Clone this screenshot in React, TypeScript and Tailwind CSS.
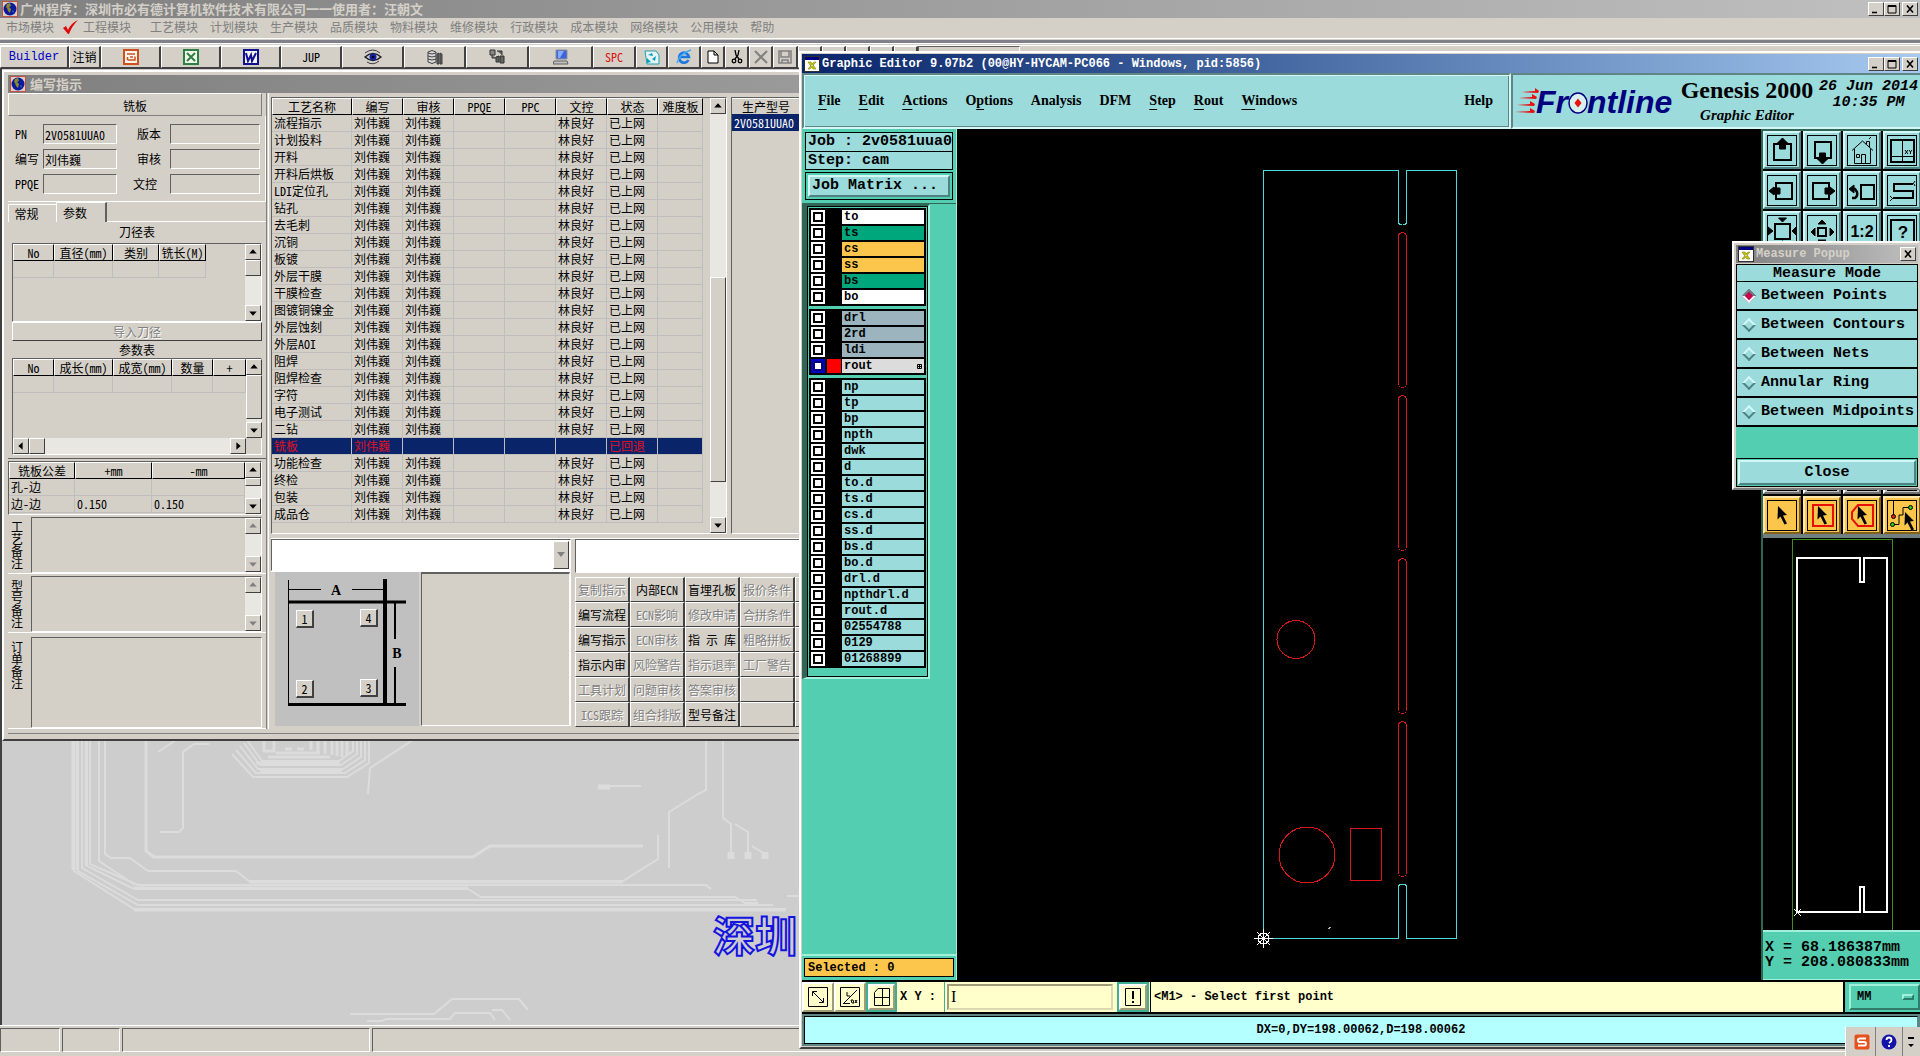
import type { ReactNode } from 'react'

const raised = 'border border-t-white border-l-white border-r-[#404040] border-b-[#404040]'
const sunken = 'border border-t-[#606060] border-l-[#606060] border-r-white border-b-white'
const motif =
  'border-2 border-t-[#d4f8f8] border-l-[#d4f8f8] border-r-[#4f8282] border-b-[#4f8282] bg-[#9bdbdb]'
const embossed = 'text-[#808080] [text-shadow:1px_1px_#fff]'
const mono = "font-['Liberation_Mono','Noto_Sans_CJK_SC',monospace] font-bold"

const MODULES = ['工艺模块', '计划模块', '生产模块', '品质模块', '物料模块', '维修模块', '行政模块', '成本模块', '网络模块', '公用模块', '帮助']

const STEPS = [
  '流程指示', '计划投料', '开料', '开料后烘板', 'LDI定位孔', '钻孔', '去毛刺', '沉铜',
  '板镀', '外层干膜', '干膜检查', '图镀铜镍金', '外层蚀刻', '外层AOI', '阻焊', '阻焊检查',
  '字符', '电子测试', '二钻', '铣板', '功能检查', '终检', '包装', '成品仓',
]

const ACTIONS: [string, boolean][] = [
  ['复制指示', false], ['内部ECN', true], ['盲埋孔板', true], ['报价条件', false], ['', false],
  ['编写流程', true], ['ECN影响', false], ['修改申请', false], ['合拼条件', false], ['', false],
  ['编写指示', true], ['ECN审核', false], ['指 示 库', true], ['粗略拼板', false], ['', false],
  ['指示内审', true], ['风险警告', false], ['指示退率', false], ['工厂警告', false], ['', false],
  ['工具计划', false], ['问题审核', false], ['答案审核', false], ['', false], ['', false],
  ['ICS跟踪', false], ['组合排版', false], ['型号备注', true], ['', false], ['', false],
]

const LAYERS = [
  [
    { name: 'to', bg: 'bg-white' },
    { name: 'ts', bg: 'bg-[#00a67c]' },
    { name: 'cs', bg: 'bg-[#fcc64c]' },
    { name: 'ss', bg: 'bg-[#fcc64c]' },
    { name: 'bs', bg: 'bg-[#00a67c]' },
    { name: 'bo', bg: 'bg-white' },
  ],
  [
    { name: 'drl', bg: 'bg-[#9bb4be]' },
    { name: '2rd', bg: 'bg-[#9bb4be]' },
    { name: 'ldi', bg: 'bg-[#9bb4be]' },
    { name: 'rout', bg: 'bg-[#dcdcdc]' },
  ],
  [
    'np', 'tp', 'bp', 'npth', 'dwk', 'd', 'to.d', 'ts.d', 'cs.d', 'ss.d', 'bs.d', 'bo.d',
    'drl.d', 'npthdrl.d', 'rout.d', '02554788', '0129', '01268899',
  ].map((name) => ({ name, bg: 'bg-[#9bdbdb]' })),
]

const MENUS: [string, number][] = [
  ['File', 0], ['Edit', 0], ['Actions', 0], ['Options', 1], ['Analysis', -1], ['DFM', -1], ['Step', 0], ['Rout', 0], ['Windows', 0],
]

const MEASURES = ['Between Points', 'Between Contours', 'Between Nets', 'Annular Ring', 'Between Midpoints']

function Globe() {
  return (
    <svg className="size-4 shrink-0" viewBox="0 0 16 16">
      <rect x="0.5" y="0.5" width="15" height="15" fill="#d4d0c8" stroke="#c85040" />
      <circle cx="8" cy="8" r="6.5" fill="#0a1a9c" />
      <path d="M5 3l3-1 1 3-2 1 2 2-1 4-2-2-1-3-1-1z" fill="#8a8a2a" />
      <path d="M10 9l2 1-1 2z" fill="#3c6ad0" />
    </svg>
  )
}

function XIcon() {
  return (
    <svg className="size-4 shrink-0" viewBox="0 0 16 16">
      <rect x="0.5" y="0.5" width="15" height="15" fill="#fff" stroke="#303030" />
      <rect x="1" y="1" width="14" height="3" fill="#000080" />
      <path d="M4 6l3 0 5 7-3 0zM12 6l-2 0-6 7 2 0z" fill="#c8c800" stroke="#707000" strokeWidth="0.5" />
    </svg>
  )
}

function CaptionButton({ label, children }: { label: string; children: ReactNode }) {
  return (
    <button aria-label={label} className={`${raised} h-3.5 w-4 bg-[#d4d0c8]`}>
      <svg className="size-full" viewBox="0 0 14 12" fill="none" stroke="#000" strokeWidth="1.6">{children}</svg>
    </button>
  )
}

function Caption() {
  return (
    <div className="ml-auto flex items-center">
      <CaptionButton label="最小化"><path d="M3 9.5h5" /></CaptionButton>
      <CaptionButton label="最大化"><path d="M3 2.5h8v7.5h-8zM3 3.5h8" strokeWidth="1" /></CaptionButton>
      <span className="w-0.5" />
      <CaptionButton label="关闭"><path d="M4 2.5l6 7M10 2.5l-6 7" /></CaptionButton>
    </div>
  )
}

function Arrow({ d, off }: { d: 'up' | 'down' | 'left' | 'right'; off?: boolean }) {
  const paths = { up: 'M3 8l3.5-4L10 8z', down: 'M3 5l3.5 4L10 5z', left: 'M8 3L4 6.5 8 10z', right: 'M5 3l4 3.5L5 10z' }
  return (
    <button aria-label={d} disabled={off} className={`${raised} size-4 shrink-0 bg-[#d4d0c8]`}>
      <svg className="size-full" viewBox="0 0 13 13"><path d={paths[d]} fill={off ? '#808080' : '#000'} /></svg>
    </button>
  )
}

function ScrollBar({ thumb, off }: { thumb?: string; off?: boolean }) {
  return (
    <div className="ml-auto flex w-4 shrink-0 flex-col bg-[#e9e7e2]">
      <Arrow d="up" off={off} />
      <div className="flex-1">{thumb && <div className={`${raised} ${thumb} bg-[#d4d0c8]`} />}</div>
      <Arrow d="down" off={off} />
    </div>
  )
}

function Grid({ cols, rows, width }: { cols: [string, string][]; rows: string[][]; width: string }) {
  return (
    <table className={`${width} table-fixed border-separate border-spacing-0 self-start`}>
      <thead>
        <tr>
          {cols.map(([label, w]) => (
            <th key={label} className={`${w} h-[17px] overflow-hidden border-t border-r border-b border-l border-t-white border-r-black border-b-black border-l-white p-0 text-center leading-[15px] font-normal whitespace-nowrap`}>
              {label}
            </th>
          ))}
        </tr>
      </thead>
      <tbody>
        {rows.map((row, i) => {
          const picked = row[0] === '铣板'
          return (
            <tr key={i} className={picked ? 'bg-[#0a246a] text-[#e01020]' : ''}>
              {row.map((cell, j) => (
                <td key={j} className="h-[17px] border-r border-b border-[#c0bebc] p-0 pl-0.5 leading-4 whitespace-nowrap">{cell}</td>
              ))}
            </tr>
          )
        })}
      </tbody>
    </table>
  )
}

function Tool({ w, label, children }: { w: string; label: string; children?: ReactNode }) {
  return (
    <button aria-label={label} className={`${raised} ${w} flex h-[22px] shrink-0 items-center justify-center border-r-2`}>
      {children}
    </button>
  )
}

function Office({ color, children }: { color: string; children: ReactNode }) {
  return (
    <svg className="size-4" viewBox="0 0 16 16" fill="none" stroke={color} strokeWidth="2">
      <rect x="1" y="1" width="14" height="14" fill="#f4f4f0" />
      {children}
    </svg>
  )
}

function Toolbar() {
  return (
    <div className="flex h-[22px] shrink-0">
      <button className={`${raised} w-[69px] border-r-2 font-['Liberation_Mono',monospace] text-[#0000c8]`}>Builder</button>
      <button className={`${raised} w-8 border-r-2`}>注销</button>
      <Tool w="w-[60px]" label="PowerPoint">
        <Office color="#d0501c"><path d="M4 5h8M4.500 11h7.500V7.500M4.500 8v3M7 8h3" strokeWidth="1.5" /></Office>
      </Tool>
      <Tool w="w-[60px]" label="Excel">
        <Office color="#2c8040"><path d="M4 4l8 8M12 4l-8 8" /></Office>
      </Tool>
      <Tool w="w-[60px]" label="Word">
        <Office color="#101090"><path d="M3 4l2 8 3-6 1 6 4-8" /></Office>
      </Tool>
      <Tool w="w-[61px]" label="JUP">JUP</Tool>
      <Tool w="w-[62px]" label="查看">
        <svg className="h-4 w-[18px]" viewBox="0 0 18 16">
          <path d="M1 8q8-7 16 0q-8 7-16 0z" fill="#c8d0d8" stroke="#202020" strokeWidth="1.5" />
          <path d="M1 4q8-6 15 0M3 13q6 4 12-1" fill="none" stroke="#404040" />
          <circle cx="9" cy="8" r="3.5" fill="#1020a0" />
          <circle cx="9" cy="8" r="1.3" fill="#000" />
        </svg>
      </Tool>
      <Tool w="w-[62px]" label="数据库">
        <svg className="size-4" viewBox="0 0 16 16" stroke="#404040">
          <path d="M1 3v10q4 3 8 0V3q-4-3-8 0z" fill="#d8d8d8" />
          <path d="M1 4q4 2 8 0M1 7q4 2 8 0M1 10q4 2 8 0" fill="none" />
          <path d="M10 5l2-1v11h-2zM13 4l2 1v10h-2z" fill="#606060" />
        </svg>
      </Tool>
      <Tool w="w-[63px]" label="网络">
        <svg className="size-4" viewBox="0 0 16 16" stroke="#303030">
          <path d="M1 1h5v5h-5zM3 6v3h5" fill="#8a8a8a" />
          <path d="M7 8l3-1v6h-3zM11 7h4v7h-4zM8 2h5v4" fill="#606860" />
        </svg>
      </Tool>
      <Tool w="w-16" label="电脑">
        <svg className="size-4" viewBox="0 0 16 16">
          <path d="M3 1h11v9h-11z" fill="#3c64e0" stroke="#909090" />
          <path d="M5 2h6l-4 7h-2z" fill="#88a8f8" />
          <path d="M1 12h13l1 3h-15z" fill="#c0c0c0" stroke="#606060" />
        </svg>
      </Tool>
      <Tool w="w-[43px]" label="SPC"><span className="text-[#e01010]">SPC</span></Tool>
      <Tool w="w-8" label="回收">
        <svg className="size-4" viewBox="0 0 16 16">
          <path d="M1 2h11l3 4v9h-12z" fill="#e8f4f4" stroke="#20a0b0" />
          <path d="M4 6l4-2 1 3zM12 7l-1 5-3-2zM3 9l4 4-4 1z" fill="#00a0c0" />
        </svg>
      </Tool>
      <Tool w="w-[33px]" label="浏览器">
        <svg className="size-4" viewBox="0 0 16 16" fill="none">
          <path d="M12.5 11a5 5 0 1 1 .5-3h-9" stroke="#1c78e0" strokeWidth="2.6" />
          <path d="M1 14q2-9 14-13" stroke="#40a8f8" strokeWidth="1.4" />
        </svg>
      </Tool>
      <Tool w="w-6" label="新建">
        <svg className="h-3.5 w-3" viewBox="0 0 12 14"><path d="M1 1h6l4 4v8h-10zM7 1v4h4" fill="#fff" stroke="#000" /></svg>
      </Tool>
      <Tool w="w-6" label="剪切">
        <svg className="h-3.5 w-3" viewBox="0 0 12 14" fill="none" stroke="#000" strokeWidth="1.3">
          <path d="M4 0l1 5 3 4M8 0l-1 5-3 4" /><circle cx="3" cy="11" r="1.8" /><circle cx="9" cy="11" r="1.8" />
        </svg>
      </Tool>
      <Tool w="w-6" label="删除">
        <svg className="size-3.5" viewBox="0 0 14 14"><path d="M1 1l12 12M13 1l-12 12" stroke="#808080" strokeWidth="2" /></svg>
      </Tool>
      <Tool w="w-[25px]" label="保存">
        <svg className="size-3.5" viewBox="0 0 14 14"><path d="M1 1h12v12h-12zM3 1v6h8v-6M4 13v-3h6v3" fill="none" stroke="#808080" strokeWidth="1.5" /></svg>
      </Tool>
      {['首条', '上条', '下条', '末条', '刷新'].map((t) => <Tool key={t} w="w-6" label={t} />)}
      <div className={`${sunken} w-[102px]`} />
    </div>
  )
}

// Copper traces behind the child windows
function Traces() {
  return (
    <svg className="absolute bottom-0 left-0 h-[285px] w-[1100px]" viewBox="2 0 1100 285" fill="none" stroke="#dcdcdc" strokeWidth="2">
      <path d="M74 0V131L134 169H786M78 0V131L138 165H773M82 0V128L138 160H757M87 0V126L134 149H468L481 157H735L745 163H758M90 0V124L138 145H706L711 149M99 0V121L135 145" />
      <path d="M105 0V114L111 118H130L148 131H236L249 141H623L658 119V95" />
      <path d="M134 148H468M134 170H786M249 142H623M73 0V130M77 0V130M86 0V126" strokeWidth="3" />
      <path d="M146 0V111L154 117H473L490 106H643" strokeWidth="3" />
      <path d="M209 4H194L183 12V88L179 92H160M176 0L158 12M413 0L370 28L368 54" />
      <path d="M605 46H641M706 0V50L698 54L669 72V128M723 0V78L731 84V118M735 84L748 92V118M752 106L765 114V118" />
      <path d="M731 112v7M748 112v7M765 112v7" strokeWidth="7" />
      <path d="M598 47h12" strokeWidth="5" />
      <path d="M350 274H434L452 259H519L528 270M367 281H382L386 279H450L455 273H490L495 280M492 270H502L510 280M787 156H800" />
      {/* coil */}
      <path d="M232 14L253 37H347L369 23V0M236 10L256 33H345L365 20V0M240 6L258 29H343L361 17V0M244 3L260 25H341L357 14V0M247 0L262 21H339L353 11V0" />
      <path d="M256 23H340M260 31H342M268 17H330M276 13H320M264 0V11h10V0M285 9h7M297 9h7M311 0V10M318 0V12M325 0V14M332 0V15M337 0V16M342 0V17M347 0V15" strokeWidth="3" />
      <text x="713" y="212" fontSize="42" fontWeight="700" stroke="#1414e0" strokeWidth="2" className="font-['Noto_Sans_CJK_SC',sans-serif]">深圳</text>
    </svg>
  )
}

function Field({ label, value, id, pad }: { label: string; value?: string; id: string; pad: string }) {
  return (
    <>
      <label htmlFor={id} className={`${pad} self-center whitespace-nowrap`}>{label}</label>
      <input id={id} defaultValue={value} className={`${sunken} h-5 w-full min-w-0 px-px`} />
    </>
  )
}

function Note({ label, id, h, scroll }: { label: string; id: string; h: string; scroll?: boolean }) {
  return (
    <div className={`${h} mt-0.5 flex border-b border-white`}>
      <label htmlFor={id} className="w-[23px] shrink-0 pt-1 pr-2 pl-[3px] leading-3 break-all">{label}</label>
      <div className={`${sunken} mr-1 flex flex-1`}>
        <textarea id={id} className="h-full min-w-0 flex-1 resize-none outline-none" />
        {scroll && <ScrollBar off />}
      </div>
    </div>
  )
}

function LeftPane() {
  return (
    <div className="flex w-[259px] shrink-0 flex-col border-r border-[#808080]">
      <div className="mr-1 h-[23px] border border-t-white border-r-[#808080] border-b-[#808080] border-l-white text-center leading-[23px]">铣板</div>
      <div className="grid h-[86px] grid-cols-[28px_74px_53px_90px] content-start gap-y-[5px] border-r border-b border-white pt-2 pl-[7px]">
        <Field id="pn" label="PN" value="2V0581UUA0" pad="pl-0" />
        <Field id="ver" label="版本" pad="pl-5" />
        <Field id="writer" label="编写" value="刘伟巍" pad="pl-0" />
        <Field id="check" label="审核" pad="pl-5" />
        <Field id="ppqe" label="PPQE" pad="pl-0" />
        <Field id="doc" label="文控" pad="pl-4" />
      </div>
      <div className="flex h-5 items-end">
        <button className="h-[18px] w-12 border-t border-l border-white pr-3">常规</button>
        <button className="h-5 w-[51px] border-t border-r-2 border-l border-t-white border-r-[#606060] border-l-white pr-3">参数</button>
        <div className="flex-1 self-end border-b border-white" />
      </div>
      <div className="flex h-[237px] flex-col border-b border-[#606060] px-1">
        <h3 className="h-[21px] text-center leading-5">刀径表</h3>
        <div className={`${sunken} flex h-[79px]`}>
          <Grid width="w-[193px]" cols={[['No', 'w-[41px]'], ['直径(mm)', 'w-[59px]'], ['类别', 'w-[46px]'], ['铣长(M)', 'w-[47px]']]} rows={[['', '', '', '']]} />
          <ScrollBar thumb="h-4" />
        </div>
        <button disabled className={`${raised} ${embossed} h-[19px] shrink-0 leading-4`}>导入刀径</button>
        <h3 className="h-[17px] text-center leading-[17px]">参数表</h3>
        <div className={`${sunken} flex h-[97px]`}>
          <div className="flex w-[233px] flex-col justify-between">
            <Grid width="w-[233px]" cols={[['No', 'w-[41px]'], ['成长(mm)', 'w-[59px]'], ['成宽(mm)', 'w-[59px]'], ['数量', 'w-[41px]'], ['+', 'w-[33px]']]} rows={[['', '', '', '', '']]} />
            <div className="flex bg-[#e9e7e2]">
              <Arrow d="left" />
              <div className={`${raised} size-4 bg-[#d4d0c8]`} />
              <span className="flex-1" />
              <Arrow d="right" />
            </div>
          </div>
          <div className="mb-4 ml-auto flex"><ScrollBar thumb="h-11" /></div>
        </div>
      </div>
      <div className={`${sunken} mt-0.5 mr-1 flex h-[54px] shrink-0 overflow-hidden`}>
        <Grid width="w-[236px]" cols={[['铣板公差', 'w-[66px]'], ['+mm', 'w-[77px]'], ['-mm', 'w-[93px]']]} rows={[['孔-边', '', ''], ['边-边', '0.150', '0.150']]} />
        <ScrollBar thumb="h-2" />
      </div>
      <Note id="n1" label="工艺备注" h="h-[57px]" scroll />
      <Note id="n2" label="型号备注" h="h-[57px]" scroll />
      <Note id="n3" label="订单备注" h="h-[94px] pt-0.5" />
    </div>
  )
}

function PanelDiagram() {
  const pad = `${raised} absolute size-[18px] border-r-2 border-b-2 bg-[#d4d0c8] leading-3`
  return (
    <div className="relative ml-1 h-[154px] w-36 bg-[#c0c0c0]">
      <svg className="size-full" viewBox="0 0 144 154" fill="none" stroke="#000">
        <path d="M13.5 8V134M13 17.5h33M77 17.5h31" />
        <path d="M13 30h118M13 132.5h118" strokeWidth="3" />
        <path d="M110 7V134" strokeWidth="4" />
        <path d="M120 30V67M120 95V132" strokeWidth="2" />
        <text x="61" y="23" textAnchor="middle" fontSize="14" fontWeight="700" fill="#000" stroke="none" className="font-['Liberation_Serif',serif]">A</text>
        <text x="122" y="86" textAnchor="middle" fontSize="14" fontWeight="700" fill="#000" stroke="none" className="font-['Liberation_Serif',serif]">B</text>
      </svg>
      <button className={`${pad} top-[38px] left-[21px]`}>1</button>
      <button className={`${pad} top-[37px] left-[85px]`}>4</button>
      <button className={`${pad} top-[108px] left-[21px]`}>2</button>
      <button className={`${pad} top-[107px] left-[85px]`}>3</button>
    </div>
  )
}

function FlowPane() {
  const rows = STEPS.map((s) =>
    s === '铣板' ? [s, '刘伟巍', '', '', '', '', '已回退', ''] : [s, '刘伟巍', '刘伟巍', '', '', '林良好', '已上网', ''],
  )
  return (
    <div className="ml-px flex flex-1 flex-col border-l border-white pt-1 pl-0.5">
      <div className="flex h-[437px]">
        <div className={`${sunken} flex w-[456px]`}>
          <Grid
            width="w-[431px]"
            cols={[['工艺名称', 'w-[80px]'], ['编写', 'w-[51px]'], ['审核', 'w-[51px]'], ['PPQE', 'w-[51px]'], ['PPC', 'w-[51px]'], ['文控', 'w-[51px]'], ['状态', 'w-[51px]'], ['难度板', 'w-[45px]']]}
            rows={rows}
          />
          <ScrollBar thumb="mt-[163px] h-[205px]" />
        </div>
        <div className={`${sunken} ml-1 flex-1`}>
          <table className="w-[68px] border-separate border-spacing-0">
            <thead><tr><th className="h-4 border-t border-white p-0 text-center leading-[15px] font-normal">生产型号</th></tr></thead>
            <tbody><tr><td className="h-[17px] bg-[#0a246a] p-0 pl-0.5 leading-4 text-white">2V0581UUA0</td></tr></tbody>
          </table>
        </div>
      </div>
      <div className="mt-1 flex border-t border-white">
        <div className="w-[300px]">
          <div className={`${sunken} flex h-8 bg-white p-px`}>
            <select aria-label="工艺" className="min-w-0 flex-1 appearance-none" />
            <button aria-label="展开" className={`${raised} flex w-4 items-center justify-center bg-[#d4d0c8]`}>
              <svg className="h-1.5 w-2" viewBox="0 0 8 6"><path d="M0 0h8l-4 5z" fill="#808080" /></svg>
            </button>
          </div>
          <div className="flex border-t border-r border-white">
            <PanelDiagram />
            <div className={`${sunken} ml-0.5 h-[154px] flex-1 border-t-2`} />
          </div>
        </div>
        <div className="ml-1 flex-1">
          <input aria-label="搜索" className={`${sunken} mb-1 h-[34px] w-full bg-white`} />
          <div className="grid auto-rows-[25px] grid-cols-[repeat(5,55px)]">
            {ACTIONS.map(([label, on], i) => (
              <button key={i} disabled={!on} className={`${raised} border-r-2 whitespace-pre ${on ? '' : embossed}`}>{label}</button>
            ))}
          </div>
        </div>
      </div>
    </div>
  )
}

function InstructionWindow() {
  return (
    <section className="absolute top-px right-0 left-0 h-[671px] border-2 border-t-white border-r-[#404040] border-b-[#404040] border-l-white bg-[#d4d0c8] px-1 pt-[3px]">
      <div className="flex h-[18px] items-center gap-1 bg-linear-to-r from-[#808080] to-[#c0c0c0] pl-0.5 text-[13px] font-bold text-[#d4d0c8]">
        <Globe />编写指示
      </div>
      <div className="flex h-[641px] border-b border-[#808080] pb-1">
        <LeftPane />
        <FlowPane />
      </div>
    </section>
  )
}

/* ---------- Graphic Editor ---------- */

function FrontlineLogo() {
  return (
    <svg className="h-11 w-[162px] shrink-0" viewBox="0 -4 162 44" role="img" aria-label="Frontline">
      <path d="M6 7l14-1 0-3 4 3-1 2zM4 13l13-1 0-3 5 3-1 2zM2 20l13-1 0-3 5 3-1 2zM0 27l15-1 0-3 5 3-1 2z" fill="#e81010" />
      <g fill="#000080" fontSize="32" fontWeight="700" fontStyle="italic" className="font-['Liberation_Sans',sans-serif]">
        <text x="21" y="28">Fr</text>
        <text x="72" y="28">ntline</text>
      </g>
      <ellipse cx="63" cy="18" rx="9" ry="10" fill="#d8f0f0" stroke="#000080" strokeWidth="1.5" />
      <path d="M63 13.500l3.500 4.500-3.500 4.500-3.500-4.500z" fill="#e81010" />
    </svg>
  )
}

function MenuBar() {
  return (
    <div className="flex h-14 shrink-0 text-black">
      <nav className="flex flex-1 items-center gap-[18px] border-2 border-t-[#5f8585] border-r-[#d4f8f8] border-b-[#d4f8f8] border-l-[#5f8585] bg-[#9bdbdb] pr-4 pl-3.5 font-['Liberation_Serif',serif] text-sm font-bold shadow-[inset_1px_1px_#d4f8f8,inset_-1px_-1px_#5f8585]">
        {MENUS.map(([label, key]) => (
          <button key={label}>
            {key < 0 ? label : (
              <>{label.slice(0, key)}<span className="underline underline-offset-4">{label[key]}</span>{label.slice(key + 1)}</>
            )}
          </button>
        ))}
        <button className="ml-auto">Help</button>
      </nav>
      <div className="flex w-[409px] items-start border-2 border-t-[#5f8585] border-r-0 border-b-[#d4f8f8] border-l-[#5f8585] bg-[#9bdbdb] pl-0.5">
        <div className="pt-1.5"><FrontlineLogo /></div>
        <div className="flex w-[140px] shrink-0 flex-col items-center font-['Liberation_Serif',serif] font-bold">
          <span className="text-2xl leading-[30px] whitespace-nowrap">Genesis 2000</span>
          <span className="text-[15px] leading-5 italic">Graphic Editor</span>
        </div>
        <div className={`${mono} w-[103px] shrink-0 pt-1 text-center text-[15px] leading-4 whitespace-nowrap italic`}>
          <div>26 Jun 2014</div>
          <div>10:35 PM</div>
        </div>
      </div>
    </div>
  )
}

function LayerDock() {
  return (
    <div className={`${mono} flex w-[155px] shrink-0 flex-col border-r border-[#a0f0dc] bg-[#54ceb0]`}>
      <div className="flex flex-col px-[3px] pt-[3px] pb-[3px] text-[15px] leading-[18px]">
        <div className="h-5 border border-black bg-[#9bdbdb] pl-0.5 whitespace-nowrap">Job : 2v0581uua0</div>
        <div className="h-[18px] border border-t-0 border-black bg-[#9bdbdb] pl-0.5">Step: cam</div>
        <div className="mt-0.5 border border-black p-0.5">
          <button className={`${motif} block h-[22px] w-full pl-0.5 text-left`}>Job Matrix ...</button>
        </div>
      </div>
      <div className="flex-1 border-t border-b-2 border-t-[#2f6655] border-b-[#a0f0dc]">
        <div className="w-32 border-t-2 border-r-2 border-b-2 border-l-[5px] border-t-[#2f6655] border-r-[#a0f0dc] border-b-[#a0f0dc] border-l-[#2f6655]">
          <div className="flex flex-col gap-[3px] border border-black p-px pb-2">
            {LAYERS.map((group, i) => (
              <div key={i} className="bg-black px-0.5 pt-0.5">
                {group.map(({ name, bg }) => (
                  <label key={name} className="mb-0.5 flex h-3.5 text-xs leading-[14px]">
                    <input
                      type="checkbox"
                      defaultChecked={name === 'rout'}
                      className="size-3.5 shrink-0 appearance-none border-2 border-white bg-white shadow-[inset_0_0_0_2px_#000] checked:border-[#0000c8] checked:shadow-[inset_0_0_0_2px_#000080]"
                    />
                    <span className={`mr-px ml-0.5 w-3.5 shrink-0 ${name === 'rout' ? 'bg-[#ff0000]' : 'bg-black'}`} />
                    <span className={`${bg} flex min-w-0 flex-1 items-center pl-0.5`}>
                      {name}
                      {name === 'rout' && (
                        <svg className="mr-0.5 ml-auto size-[5px]" viewBox="0 0 5 5"><path d="M.5.5h4v4h-4zM2.500 0v5M0 2.500h5" fill="none" stroke="#000" /></svg>
                      )}
                    </span>
                  </label>
                ))}
              </div>
            ))}
          </div>
        </div>
      </div>
      <div className="p-0.5 pb-[3px]">
        <div className="h-[19px] border border-black bg-[#fcc64c] pl-[3px] text-xs leading-[18px]">Selected : 0</div>
      </div>
    </div>
  )
}

const RED_SLOTS = [232, 395, 558, 721]

function Board() {
  return (
    <div className="min-w-0 flex-1 overflow-hidden bg-black">
      <svg className="h-[848px] w-[804px]" viewBox="957 129 804 848" fill="none" strokeWidth="1" shapeRendering="crispEdges">
        <path d="M1263.5 170.500H1398.500V222q0 3 4 3t4-3V170.500H1456.500V938.500H1406.500V887q0-3-4-3t-4 3V938.500H1263.500z" stroke="#4fd8d8" />
        <g stroke="#d81818">
          {RED_SLOTS.map((y) => <rect key={y} x="1398.5" y={y + 0.5} width="8" height="155" rx="4" />)}
          <circle cx="1296" cy="639.5" r="19" />
          <circle cx="1307" cy="855" r="28" />
          <rect x="1350.5" y="828.5" width="31" height="52" />
        </g>
        <g stroke="#fff">
          <circle cx="1263.5" cy="938.5" r="5.5" />
          <path d="M1254 938.500h19M1263.500 929v19M1257 932l13 13M1270 932l-13 13" />
          <path d="M1328 929l3-2" stroke="#b0b0b0" />
        </g>
      </svg>
    </div>
  )
}

const ICONS: [string, ReactNode][] = [
  ['Pan up', <><path d="M11 13h17v16h-17z" strokeWidth="2" /><path d="M19.500 7l5 5h-2v6h-6v-6h-2z" fill="#000" /></>],
  ['Pan down', <><path d="M12 11h16v16h-16z" strokeWidth="2" /><path d="M19.500 33l5-5h-2v-6h-6v6h-2z" fill="#000" /></>],
  ['Home', <path d="M9 19.500L19.500 10L30 19.500M11.500 18V32.500H27.500V18M18.500 32V23.500h4V32M13.500 23.500h3v3h-3zM23.500 13V10.500h3V16M26 8l2-2" />],
  ['Grid', <><path d="M8 9h23v22h-23z" strokeWidth="2" /><path d="M19.500 9v22M8 25.500h23M22 19l3 4M25 19l-3 4M26 19l1.500 2L29 19M27.500 21v2" /></>],
  ['Pan left', <><path d="M13 12h16v16h-16z" strokeWidth="2" /><path d="M6 20l5-4v1h6v6h-6v1z" fill="#000" /></>],
  ['Pan right', <><path d="M10 12h16v16h-16z" strokeWidth="2" /><path d="M32 20l-5-4v1h-5v6h5v1z" fill="#000" /></>],
  ['Undo', <><path d="M18 14h13v14h-13z" strokeWidth="2" /><path d="M9 27h3q3-2 2-6l-2-3H9" strokeWidth="2.500" /><path d="M6 18l5-4v8z" fill="#000" /></>],
  ['Snake', <><path d="M30 13H11V20H30V27H10" strokeWidth="2" /><path d="M30 13l2-3M10 27l-3 3M31 13l1 2M7 25l2 2" /></>],
  ['Zoom in', <><path d="M12 13h15v15h-15z" strokeWidth="2" /><path d="M19.500 11l-4-4h8zM10 20l-5-4v8zM29 20l4-4v8zM19.500 30l-4 3h8z" fill="#000" /></>],
  ['Zoom out', <><path d="M15 17h8v8h-8z" strokeWidth="2" /><path d="M19 9l-4 4h8zM8 21l4-4v8zM31 21l-4-4v8zM19 32l-4-3h8z" fill="#000" /></>],
  ['Scale', <text x="19" y="26" textAnchor="middle" fontSize="16" fontWeight="700" fill="#000" stroke="none" className="font-['Liberation_Sans',sans-serif]">1:2</text>],
  ['Help', <><path d="M8 9h23v24h-23z" strokeWidth="2" /><text x="20" y="27" textAnchor="middle" fontSize="17" fontWeight="700" fill="#000" stroke="none" className="font-['Liberation_Sans',sans-serif]">?</text></>],
]

const cursor = <path d="M15 10l9 9-4 .5 4 8-2.500 1-4-8-3 3z" fill="#000" stroke="none" />

const PICKS: [string, ReactNode][] = [
  ['Select', cursor],
  ['Select in box', <><path d="M10 9h20v21h-20z" stroke="#e81000" strokeWidth="2" />{cursor}</>],
  ['Select in polygon', <><path d="M15 9h15v21H15l-6-7V16z" stroke="#e81000" strokeWidth="2" />{cursor}</>],
  ['Select net', <><path d="M10.500 5v16M10 28.500h6V19h4V11.500h7" /><circle cx="10.500" cy="20.500" r="2" fill="#e02010" /><circle cx="9.500" cy="28.500" r="2" fill="#20d020" /><circle cx="27.500" cy="11.500" r="2" fill="#20d020" /><g transform="translate(7 6)">{cursor}</g></>],
]

function IconButton({ label, tone, children }: { label: string; tone: string; children?: ReactNode }) {
  return (
    <button aria-label={label} className={`${tone} size-[38px] border-2`}>
      <svg className="size-[34px]" viewBox="2 2 34 34" fill="none" stroke="#000">
        <rect x="4.5" y="4.5" width="29" height="30" />
        {children}
      </svg>
    </button>
  )
}

function SidePanel() {
  return (
    <div className="flex w-[159px] shrink-0 flex-col border-l-2 border-[#2f6655] bg-black">
      <div className="flex h-[365px] shrink-0 flex-col justify-between overflow-hidden border-t-2 border-[#2f6655]">
        <div className="grid auto-rows-[40px] grid-cols-[repeat(4,40px)]">
          {ICONS.map(([label, icon]) => (
            <IconButton key={label} label={label} tone="border-t-[#d4f8f8] border-l-[#d4f8f8] border-r-[#4f8282] border-b-[#4f8282] bg-[#9bdbdb]">{icon}</IconButton>
          ))}
        </div>
        <div className="grid auto-rows-[38px] grid-cols-[repeat(4,40px)]">
          {['Width', 'Length', 'Area', 'Angle'].map((label) => (
            <IconButton key={label} label={label} tone="border-t-white border-l-white border-r-[#707070] border-b-[#707070] bg-[#c8c8c8]" />
          ))}
        </div>
      </div>
      <div className="grid h-[44px] shrink-0 grid-cols-[repeat(4,40px)] overflow-hidden border-b-4 border-[#708080] pt-0.5">
        {PICKS.map(([label, icon]) => (
          <IconButton key={label} label={label} tone="border-t-[#ffe8b0] border-l-[#ffe8b0] border-r-[#80601c] border-b-[#80601c] bg-[#fcc64c]">{icon}</IconButton>
        ))}
      </div>
      <svg className="h-[392px] w-[157px] shrink-0" viewBox="1763 538 157 392" fill="none" shapeRendering="crispEdges">
        <path d="M1792.500 930V539.500H1892.500V930" stroke="#3f8c20" />
        <path d="M1797 558H1860V582H1864V558H1887V912H1864V887H1860V912H1797z" stroke="#fff" strokeWidth="2" />
        <path d="M1794 909l7 7M1801 909l-7 7" stroke="#fff" />
      </svg>
      <div className={`${mono} flex-1 border-t-2 border-b border-[#a0f0dc] bg-[#54ceb0] pt-2 pl-0.5 text-[15px] leading-[15px] whitespace-nowrap`}>
        <div>X = 68.186387mm</div>
        <div>Y = 208.080833mm</div>
      </div>
    </div>
  )
}

function CommandBar() {
  const key = 'flex items-center justify-center border-2 border-t-white border-l-white border-r-[#a09c78] border-b-[#a09c78] bg-[#ffffcc]'
  return (
    <div className={`${mono} flex h-[34px] shrink-0 border-y-2 border-black bg-[#ffffcc] text-xs`}>
      <button aria-label="Measure" className={`${key} w-8`}>
        <svg className="size-5" viewBox="0 0 20 20" fill="none" stroke="#000"><path d="M.5.500h19v19h-19zM5 5l10 10M4.500 9V4.500H9M15.500 11v4.500H11" /></svg>
      </button>
      <button aria-label="Slope" className={`${key} w-8 border-l-black`}>
        <svg className="size-5" viewBox="0 0 20 20" fill="none" stroke="#000"><path d="M.5.500h19v19h-19zM3 17L17 3M3 16.500h7M7 5v4h3M11 13l1 3h2l-1-3zM15 13l2 3M17 13l-2 3" /></svg>
      </button>
      <div className="w-[31px] border-2 border-[#3fae94]">
        <button aria-label="Snap grid" className={`${key} size-full`}>
          <svg className="h-[18px] w-4" viewBox="0 0 16 18" fill="none" stroke="#000"><path d="M.5 4.500L4 .500H15.500V17.500H.5zM8.500 1v16M1 9.500h14" /></svg>
        </button>
      </div>
      <label htmlFor="xy" className="w-12 border-r border-[#3fae94] pl-[3px] leading-[30px] whitespace-pre">X Y :</label>
      <input id="xy" defaultValue="I" className="m-[2px] w-[166px] border-2 border-t-[#a09c78] border-r-[#dcd8b0] border-b-[#dcd8b0] border-l-[#a09c78] pl-0.5 font-['Liberation_Serif',serif] text-base font-normal" />
      <div className="ml-0.5 w-8 border-2 border-[#3fae94]">
        <button aria-label="Alert" className={`${key} size-full`}>
          <svg className="h-[18px] w-4" viewBox="0 0 16 18" fill="none" stroke="#000"><path d="M.5.500h15v17H.5z" /><path d="M8 3v8M8 13v2" strokeWidth="2" /></svg>
        </button>
      </div>
      <output className="ml-px flex-1 border-l border-black pl-[3px] leading-[31px]">&lt;M1&gt; - Select first point</output>
      <div className="w-[77px] border-l-2 border-black bg-[#54ceb0] p-0.5 pr-0 pl-1">
        <button className="flex h-full w-full items-center justify-between border-2 border-t-[#a0f0dc] border-r-[#2f7c68] border-b-[#2f7c68] border-l-[#a0f0dc] pr-1 pl-1.5">
          MM
          <span className="h-1.5 w-3 border-2 border-t-[#a0f0dc] border-r-[#2f7c68] border-b-[#2f7c68] border-l-[#a0f0dc]" />
        </button>
      </div>
    </div>
  )
}

function GraphicEditor() {
  return (
    <section className="absolute top-[51px] right-0 bottom-[7px] left-[799px] flex flex-col border-t-2 border-b-2 border-l-2 border-t-white border-b-[#404040] border-l-white bg-[#d4d0c8] pt-px pb-px pl-px">
      <div className={`${mono} flex h-[19px] shrink-0 items-center gap-0.5 bg-linear-to-r from-[#0a246a] to-[#a6caf0] px-0.5 text-xs text-white`}>
        <XIcon />
        <span className="whitespace-nowrap">Graphic Editor 9.07b2 (00@HY-HYCAM-PC066 - Windows, pid:5856)</span>
        <Caption />
      </div>
      <MenuBar />
      <div className="flex min-h-0 flex-1 overflow-hidden bg-black">
        <LayerDock />
        <Board />
        <SidePanel />
      </div>
      <CommandBar />
      <div className="h-8 shrink-0 border-2 border-[#5f8585] bg-[#b4ffff]">
        <output className={`${mono} block h-full border border-t-black border-r-[#5f8585] border-b-black border-l-black text-center text-xs leading-[26px]`}>DX=0,DY=198.00062,D=198.00062</output>
      </div>
    </section>
  )
}

function MeasurePopup() {
  return (
    <section className={`${mono} absolute top-[241px] right-0 flex w-[188px] flex-col border-2 border-t-white border-r-[#d4d0c8] border-b-[#808080] border-l-white bg-[#d4d0c8] pt-0.5 pb-px pl-0.5 text-[15px]`}>
      <div className="flex h-[18px] items-center gap-0.5 bg-linear-to-r from-[#808080] to-[#c0c0c0] px-0.5 text-xs text-[#d4d0c8]">
        <XIcon />Measure Popup
        <div className="ml-auto flex text-black"><CaptionButton label="Close popup"><path d="M4 2.500l6 7M10 2.500l-6 7" /></CaptionButton></div>
      </div>
      <fieldset className="mt-px bg-[#9bdbdb]">
        <legend className="float-left h-[18px] w-full border border-black text-center leading-[17px]">Measure Mode</legend>
        {MEASURES.map((label, i) => (
          <label key={label} className="clear-both flex h-[29px] items-center gap-[7px] border border-t-0 border-b-2 border-black pl-[7px] whitespace-nowrap">
            <input
              type="radio"
              name="measure"
              defaultChecked={i === 0}
              className="size-2.5 shrink-0 rotate-45 appearance-none border-2 border-t-[#d4f8f8] border-r-[#4f8282] border-b-[#4f8282] border-l-[#d4f8f8] checked:border-t-[#5f8585] checked:border-r-white checked:border-b-white checked:border-l-[#5f8585] checked:bg-[#c8004c]"
            />
            {label}
          </label>
        ))}
      </fieldset>
      <div className="h-[31px] bg-[#54ceb0]" />
      <div className="border border-black bg-[#54ceb0] p-px">
        <button className={`${motif} block h-[25px] w-full leading-5`}>Close</button>
      </div>
    </section>
  )
}

export default function App() {
  return (
    <div className="relative flex h-screen w-full flex-col overflow-hidden bg-[#d4d0c8] font-['Noto_Sans_Mono_CJK_SC','Noto_Sans_CJK_SC',monospace] text-xs text-black">
      <header className="flex h-[18px] shrink-0 items-center gap-0.5 bg-linear-to-r from-[#808080] to-[#c0c0c0] px-0.5 text-[13px] font-bold whitespace-nowrap text-[#d4d0c8]">
        <Globe />广州程序：深圳市必有德计算机软件技术有限公司一一使用者：汪朝文
        <Caption />
      </header>
      <nav className={`${embossed} flex h-5 shrink-0 items-center gap-3 pb-0.5 pl-1.5`}>
        <button>市场模块</button>
        <span className="-ml-1 flex items-center gap-1 pr-[7px]">
          <svg className="h-4 w-[17px]" viewBox="0 0 17 16"><path d="M1 9l3-2 2 4Q9 4 16 1Q10 7 7 15H6z" fill="#e00808" /></svg>
          <button>工程模块</button>
        </span>
        {MODULES.map((m) => <button key={m}>{m}</button>)}
      </nav>
      <div className="h-2 shrink-0 border-t border-b border-white py-px">
        <div className="h-full border-b border-white bg-[#808088]" />
      </div>
      <Toolbar />
      <main className="relative flex-1 overflow-hidden border-t border-l-2 border-[#404040] bg-[#cdcdcd]">
        <Traces />
        <InstructionWindow />
      </main>
      <footer className="flex h-[31px] shrink-0 gap-0.5 border-t border-white pt-0.5 pb-1">
        <div className={`${sunken} w-[60px]`} />
        <div className={`${sunken} w-[58px]`} />
        <div className={`${sunken} w-[248px]`} />
        <div className={`${sunken} flex-1`} />
      </footer>
      <GraphicEditor />
      <MeasurePopup />
      <div className="absolute right-0 bottom-0 flex h-[29px] w-[75px] items-center justify-between border-l border-white bg-[#d4d0c8] pr-1.5 pl-2">
        <svg className="size-4" viewBox="0 0 16 16">
          <rect x="0.5" y="0.5" width="15" height="15" rx="2" fill="#e8501c" />
          <path d="M12 4.500H6q-2 0-2 1.800T6 8h4q2 0 2 1.800T10 11.500H4" fill="none" stroke="#fff" strokeWidth="2" />
        </svg>
        <span className="h-full border-l border-[#808080]" />
        <svg className="size-4" viewBox="0 0 16 16">
          <circle cx="8" cy="8" r="7.500" fill="#1414a8" />
          <path d="M5.500 6q0-2.500 2.500-2.500T10.500 6Q10.500 7.500 8 9M8 11v2" fill="none" stroke="#fff" strokeWidth="1.800" />
        </svg>
        <span className="h-full border-l border-[#808080]" />
        <svg className="h-3 w-1.5" viewBox="0 0 6 12"><path d="M0 1h6v2H0zM0 8h6l-3 3z" /></svg>
      </div>
    </div>
  )
}
